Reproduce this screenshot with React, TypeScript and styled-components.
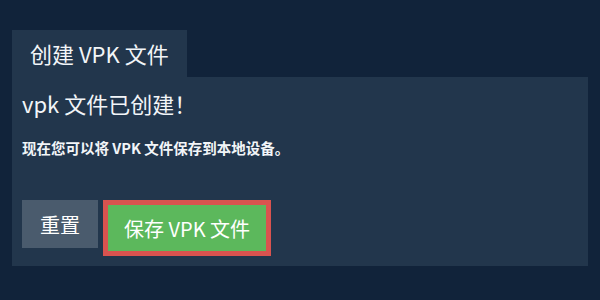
import React from 'react'
import styled, { createGlobalStyle } from 'styled-components'

const GlobalStyle = createGlobalStyle`
    html, body {
        margin: 0;
        padding: 0;
        background: #11233a;
    }
    body {
        font-family: 'Noto Sans CJK SC', 'Noto Sans', sans-serif;
        color: #f2f5f8;
    }
`

const Page = styled.div`
    width: 600px;
    height: 300px;
    padding: 30px 12px 0;
    box-sizing: border-box;
`

const Tab = styled.div`
    display: inline-block;
    background: #22364c;
    font-size: 22px;
    line-height: 47px;
    height: 47px;
    padding: 0 18px;
    color: #f2f5f8;
`

const Panel = styled.div`
    background: #22364c;
    padding: 10px 10px 10px;
    display: flex;
    flex-direction: column;
`

const Heading = styled.h2`
    margin: 0;
    font-size: 22px;
    font-weight: 400;
    line-height: 32px;
`

const Message = styled.p`
    margin: 18px 0 0;
    font-size: 14.5px;
    font-weight: 700;
    line-height: 22px;
`

const Actions = styled.div`
    display: flex;
    align-items: flex-start;
    gap: 5px;
    margin-top: 41px;
`

const Button = styled.button<{ primary?: boolean }>`
    font-family: inherit;
    font-size: 20px;
    color: #ffffff;
    border: ${({ primary }) => (primary ? '5px solid #d9534f' : 'none')};
    background: ${({ primary }) => (primary ? '#5cb85c' : '#4a5b6d')};
    height: ${({ primary }) => (primary ? '56px' : '48px')};
    padding: 0 ${({ primary }) => (primary ? '16px' : '18px')};
    cursor: pointer;
`

export default function App() {
  return (
    <>
      <GlobalStyle />
      <Page>
        <Tab>创建 VPK 文件</Tab>
        <Panel>
          <Heading>vpk 文件已创建！</Heading>
          <Message>现在您可以将 VPK 文件保存到本地设备。</Message>
          <Actions>
            <Button>重置</Button>
            <Button primary>保存 VPK 文件</Button>
          </Actions>
        </Panel>
      </Page>
    </>
  )
}
